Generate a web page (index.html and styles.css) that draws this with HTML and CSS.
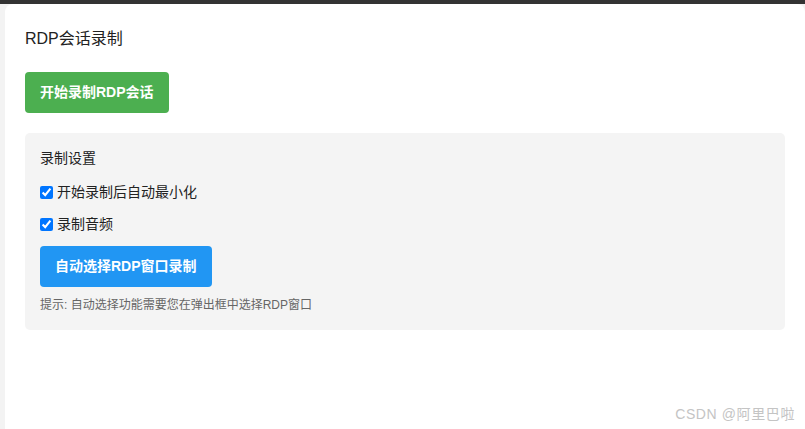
FILE: index.html
```html
<!DOCTYPE html>
<html lang="zh-CN">
<head>
<meta charset="utf-8">
<title>RDP会话录制</title>
<link rel="stylesheet" href="styles.css">
</head>
<body>
<div class="topbar"></div>
<main class="card">
  <h3 class="title">RDP会话录制</h3>
  <div class="actions">
    <button class="btn btn-green">开始录制RDP会话</button>
  </div>
  <section class="panel">
    <h4 class="panel-title">录制设置</h4>
    <label class="check"><input type="checkbox" checked><span>开始录制后自动最小化</span></label>
    <label class="check"><input type="checkbox" checked><span>录制音频</span></label>
    <div class="actions">
      <button class="btn btn-blue">自动选择RDP窗口录制</button>
    </div>
    <p class="hint">提示: 自动选择功能需要您在弹出框中选择RDP窗口</p>
  </section>
</main>
<div class="watermark">CSDN @阿里巴啦</div>
</body>
</html>
```
FILE: styles.css
```css
html, body {
  margin: 0;
  padding: 0;
  height: 100%;
}
body {
  background: #f3f3f3;
  font-family: "Liberation Sans", "Noto Sans CJK SC", sans-serif;
  color: #222;
  overflow: hidden;
  position: relative;
}
.topbar {
  height: 4px;
  background: #333333;
}
.card {
  margin-left: 5px;
  background: #ffffff;
  border-radius: 8px 8px 0 0;
  padding: 20px 20px 0 20px;
  height: 425px;
  box-sizing: border-box;
  display: flex;
  flex-direction: column;
}
.title {
  margin: 3px 0 0 0;
  font-size: 16px;
  font-weight: normal;
  line-height: 24px;
  color: #222;
}
.actions {
  display: flex;
}
.card > .actions {
  margin-top: 21px;
}
.btn {
  border: none;
  border-radius: 4px;
  color: #fff;
  font-family: "Liberation Sans", "Noto Sans CJK SC", sans-serif;
  font-size: 14px;
  font-weight: bold;
  line-height: 21px;
  padding: 10px 15px;
  height: 41px;
  cursor: pointer;
}
.btn-green { background: #4caf50; }
.btn-blue { background: #2196f3; }
.panel {
  margin-top: 20px;
  background: #f4f4f4;
  border-radius: 5px;
  padding: 15px 15px 16px 15px;
  display: flex;
  flex-direction: column;
}
.panel-title {
  margin: 0;
  font-size: 14px;
  font-weight: normal;
  line-height: 20px;
  color: #222;
}
.check {
  display: flex;
  align-items: center;
  font-size: 14px;
  line-height: 20px;
  color: #222;
  margin-top: 12px;
}
.panel-title + .check {
  margin-top: 14px;
}
.check input {
  margin: 0 4px 0 0;
  width: 13px;
  height: 13px;
}
.panel .actions {
  margin-top: 12px;
}
.hint {
  margin: 9px 0 0 0;
  font-size: 12px;
  line-height: 18px;
  color: #666;
}
.watermark {
  position: absolute;
  right: 10px;
  bottom: 6px;
  font-size: 14px;
  line-height: 18px;
  letter-spacing: 0.6px;
  color: #c4c4c4;
}
```
